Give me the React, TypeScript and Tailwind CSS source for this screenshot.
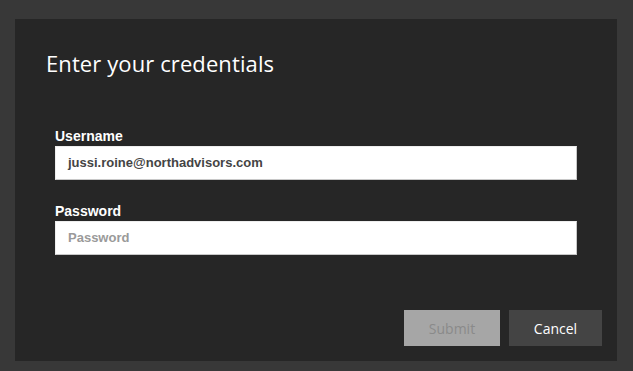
export default function App() {
  return (
    <div className="w-[633px] h-[371px] bg-[#383838] pt-[19px] pl-[15px]">
      <div className="w-[602px] h-[342px] bg-[#262626] flex flex-col">
        <h1 className="pl-[31px] pt-[29px] text-[22px] leading-[30px] text-white font-['Open_Sans',sans-serif] tracking-[0.1px]">
          Enter your credentials
        </h1>

        <div className="pl-[40px] pt-[49px] flex flex-col">
          <label className="text-[14px] leading-[18px] font-bold text-white font-['Liberation_Sans',sans-serif]">
            Username
          </label>
          <div className="mt-[1px] w-[522px] h-[34px] bg-white border border-t-[#eee] border-l-[#eee] border-r-[#c8c8c8] border-b-[#c8c8c8] flex items-center pl-[12px]">
            <span className="text-[13px] font-bold text-[#444] font-['Liberation_Sans',sans-serif]">
              jussi.roine@northadvisors.com
            </span>
          </div>

          <label className="mt-[22px] text-[14px] leading-[18px] font-bold text-white font-['Liberation_Sans',sans-serif]">
            Password
          </label>
          <div className="mt-[1px] w-[522px] h-[34px] bg-white border border-t-[#eee] border-l-[#eee] border-r-[#c8c8c8] border-b-[#c8c8c8] flex items-center pl-[12px]">
            <span className="text-[13px] font-bold text-[#9a9a9a] font-['Liberation_Sans',sans-serif]">
              Password
            </span>
          </div>
        </div>

        <div className="mt-auto mb-[15px] mr-[15px] flex justify-end gap-[9px] font-['Open_Sans',sans-serif] text-[14px]">
          <button className="w-[96px] h-[36px] bg-[#a6a6a6] text-[#8a8a8a]">Submit</button>
          <button className="w-[93px] h-[36px] bg-[#444444] text-white">Cancel</button>
        </div>
      </div>
    </div>
  );
}
